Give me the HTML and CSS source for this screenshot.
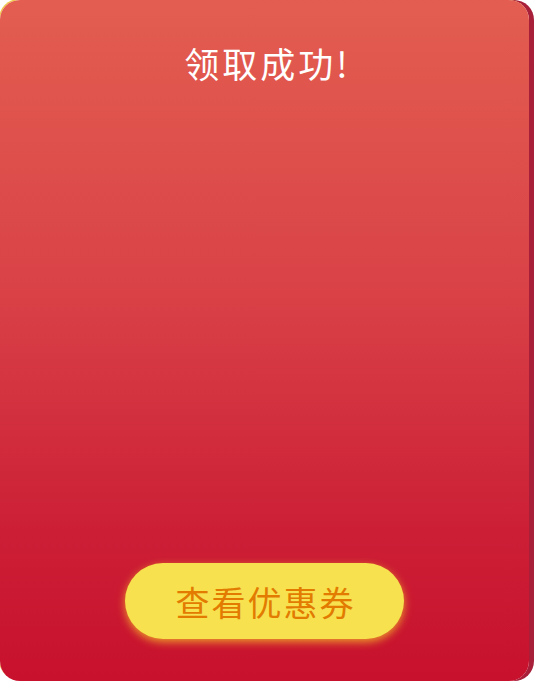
FILE: index.html
```html
<!DOCTYPE html>
<html lang="zh-CN">
<head>
<meta charset="utf-8">
<title>领取成功</title>
<link rel="stylesheet" href="styles.css">
</head>
<body>
<div class="card">
  <h1 class="title">领取成功!</h1>
  <button class="btn">查看优惠券</button>
</div>
</body>
</html>
```

FILE: styles.css
```css
html, body {
  margin: 0;
  padding: 0;
  background: #ffffff;
}
body {
  width: 534px;
  height: 681px;
  overflow: hidden;
}
.card {
  box-sizing: border-box;
  width: 529px;
  height: 681px;
  border-radius: 20px;
  background: linear-gradient(180deg, #e35e50 0%, #da4448 40%, #cc1f36 78%, #c8112d 100%);
  box-shadow: 5px 0 0 #a81f3a, -1px -1px 0 #f0c84a;
  display: flex;
  flex-direction: column;
  align-items: center;
  padding: 0 0 42px 0;
  font-family: "Noto Sans CJK SC", "Noto Sans", sans-serif;
}
.title {
  margin: 40px 0 0 0;
  font-size: 35px;
  font-weight: 400;
  line-height: 46px;
  color: #ffffff;
  letter-spacing: 3px;
  padding-left: 6px;
}
.btn {
  margin-top: auto;
  width: 279px;
  height: 76px;
  border: none;
  border-radius: 38px;
  background: #f7e14f;
  color: #e27b00;
  font-family: "Noto Sans CJK SC", "Noto Sans", sans-serif;
  font-size: 34px;
  font-weight: 400;
  letter-spacing: 2px;
  padding: 0 0 0 2px;
  box-shadow: 0 3px 8px rgba(248, 200, 40, 0.75);
  cursor: pointer;
}
```
